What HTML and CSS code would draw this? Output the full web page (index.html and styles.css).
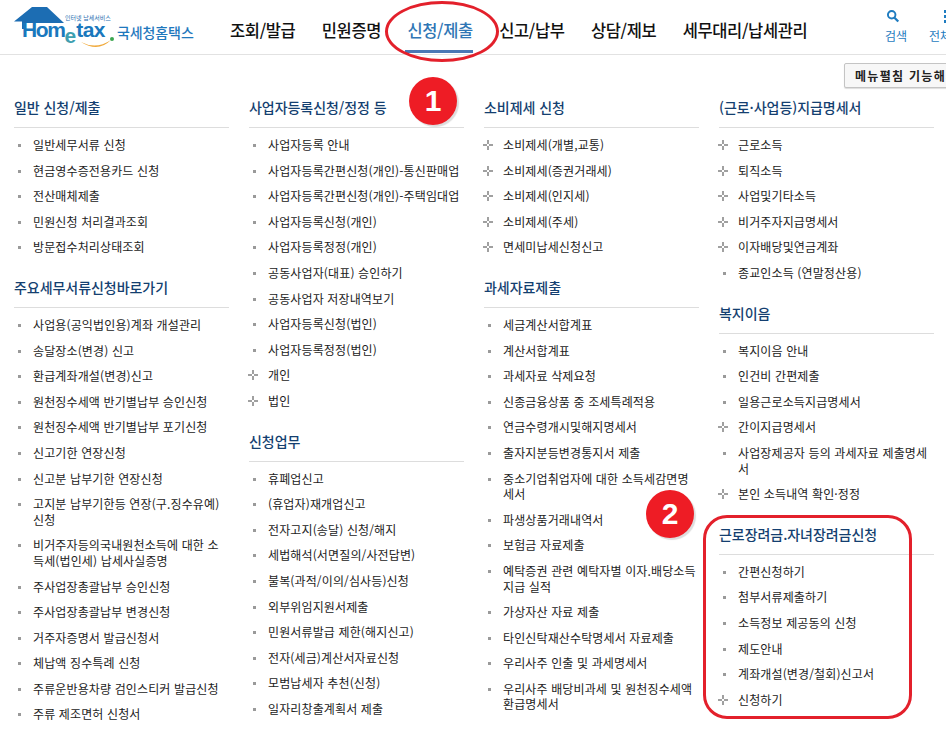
FILE: index.html
```html
<!DOCTYPE html>
<html lang="ko">
<head>
<meta charset="utf-8">
<title>Hometax</title>
<link rel="stylesheet" href="styles.css">
</head>
<body>
<div class="page">
<header class="top">
  <a class="logo">
    <svg class="house" width="106" height="44" viewBox="0 0 106 44">
      <path d="M0 15.5 L18 1 L33 1 L50 17 L10 17 L10 23 L8 23 L8 15.5 Z" fill="#1c6db3"/>
      <path d="M67 36 Q82 44 97 34 Q84 47 67 36 Z" fill="#f0a93a"/>
      <circle cx="98" cy="33" r="2" fill="#3aa651"/>
    </svg>
    <span class="logo-small">인터넷 납세서비스</span>
    <span class="logo-word"><span class="lw-a">Hom</span><i>e</i><span class="lw-b">tax</span></span>
    <span class="logo-kr">국세청홈택스</span>
  </a>
  <nav class="menu">
    <a>조회/발급</a>
    <a>민원증명</a>
    <a class="on">신청/제출</a>
    <a>신고/납부</a>
    <a>상담/제보</a>
    <a>세무대리/납세관리</a>
  </nav>
  <div class="tools">
    <a class="tool tool-a"><svg width="14" height="15" viewBox="0 0 16 16"><circle cx="6.5" cy="6" r="4.3" fill="none" stroke="#1f7cc0" stroke-width="2.2"/><path d="M9.7 9.4 L14 13.8" stroke="#1f7cc0" stroke-width="2.6"/></svg><span>검색</span></a>
    <a class="tool tool-b"><svg width="16" height="16" viewBox="0 0 16 16"><rect x="1" y="1" width="3" height="3" fill="#1f7cc0"/><rect x="1" y="6" width="3" height="3" fill="#1f7cc0"/><rect x="1" y="11" width="3" height="3" fill="#1f7cc0"/><rect x="6" y="1" width="3" height="3" fill="#1f7cc0"/><rect x="6" y="6" width="3" height="3" fill="#1f7cc0"/><rect x="6" y="11" width="3" height="3" fill="#1f7cc0"/></svg><span>전체메뉴</span></a>
  </div>
</header>
<div class="bar"><button class="expand">메뉴펼침 기능해제</button></div>
<main class="cols">
  <div class="col">
    <section>
      <h2>일반 신청/제출</h2>
      <ul>
        <li>일반세무서류 신청</li>
        <li>현금영수증전용카드 신청</li>
        <li>전산매체제출</li>
        <li>민원신청 처리결과조회</li>
        <li>방문접수처리상태조회</li>
      </ul>
    </section>
    <section>
      <h2>주요세무서류신청바로가기</h2>
      <ul>
        <li>사업용(공익법인용)계좌 개설관리</li>
        <li>송달장소(변경) 신고</li>
        <li>환급계좌개설(변경)신고</li>
        <li>원천징수세액 반기별납부 승인신청</li>
        <li>원천징수세액 반기별납부 포기신청</li>
        <li>신고기한 연장신청</li>
        <li>신고분 납부기한 연장신청</li>
        <li>고지분 납부기한등 연장(구.징수유예)신청</li>
        <li>비거주자등의국내원천소득에 대한 소득세(법인세) 납세사실증명</li>
        <li>주사업장총괄납부 승인신청</li>
        <li>주사업장총괄납부 변경신청</li>
        <li>거주자증명서 발급신청서</li>
        <li>체납액 징수특례 신청</li>
        <li>주류운반용차량 검인스티커 발급신청</li>
        <li>주류 제조면허 신청서</li>
      </ul>
    </section>
  </div>
  <div class="col">
    <section>
      <h2>사업자등록신청/정정 등</h2>
      <ul>
        <li>사업자등록 안내</li>
        <li>사업자등록간편신청(개인)-통신판매업</li>
        <li>사업자등록간편신청(개인)-주택임대업</li>
        <li>사업자등록신청(개인)</li>
        <li>사업자등록정정(개인)</li>
        <li>공동사업자(대표) 승인하기</li>
        <li>공동사업자 저장내역보기</li>
        <li>사업자등록신청(법인)</li>
        <li>사업자등록정정(법인)</li>
        <li class="plus">개인</li>
        <li class="plus">법인</li>
      </ul>
    </section>
    <section>
      <h2>신청업무</h2>
      <ul>
        <li>휴폐업신고</li>
        <li>(휴업자)재개업신고</li>
        <li>전자고지(송달) 신청/해지</li>
        <li>세법해석(서면질의/사전답변)</li>
        <li>불복(과적/이의/심사등)신청</li>
        <li>외부위임지원서제출</li>
        <li>민원서류발급 제한(해지신고)</li>
        <li>전자(세금)계산서자료신청</li>
        <li>모범납세자 추천(신청)</li>
        <li>일자리창출계획서 제출</li>
      </ul>
    </section>
  </div>
  <div class="col">
    <section>
      <h2>소비제세 신청</h2>
      <ul>
        <li class="plus">소비제세(개별,교통)</li>
        <li class="plus">소비제세(증권거래세)</li>
        <li class="plus">소비제세(인지세)</li>
        <li class="plus">소비제세(주세)</li>
        <li class="plus">면세미납세신청신고</li>
      </ul>
    </section>
    <section>
      <h2>과세자료제출</h2>
      <ul>
        <li>세금계산서합계표</li>
        <li>계산서합계표</li>
        <li>과세자료 삭제요청</li>
        <li>신종금융상품 중 조세특례적용</li>
        <li>연금수령개시및해지명세서</li>
        <li>출자지분등변경통지서 제출</li>
        <li>중소기업취업자에 대한 소득세감면명세서</li>
        <li>파생상품거래내역서</li>
        <li>보험금 자료제출</li>
        <li>예탁증권 관련 예탁자별 이자.배당소득 지급 실적</li>
        <li>가상자산 자료 제출</li>
        <li>타인신탁재산수탁명세서 자료제출</li>
        <li>우리사주 인출 및 과세명세서</li>
        <li>우리사주 배당비과세 및 원천징수세액 환급명세서</li>
      </ul>
    </section>
  </div>
  <div class="col">
    <section>
      <h2>(근로·사업등)지급명세서</h2>
      <ul>
        <li class="plus">근로소득</li>
        <li class="plus">퇴직소득</li>
        <li class="plus">사업및기타소득</li>
        <li class="plus">비거주자지급명세서</li>
        <li class="plus">이자배당및연금계좌</li>
        <li>종교인소득 (연말정산용)</li>
      </ul>
    </section>
    <section>
      <h2>복지이음</h2>
      <ul>
        <li>복지이음 안내</li>
        <li>인건비 간편제출</li>
        <li>일용근로소득지급명세서</li>
        <li class="plus">간이지급명세서</li>
        <li>사업장제공자 등의 과세자료 제출명세서</li>
        <li class="plus">본인 소득내역 확인·정정</li>
      </ul>
    </section>
    <section>
      <h2>근로장려금.자녀장려금신청</h2>
      <ul>
        <li>간편신청하기</li>
        <li>첨부서류제출하기</li>
        <li>소득정보 제공동의 신청</li>
        <li>제도안내</li>
        <li>계좌개설(변경/철회)신고서</li>
        <li class="plus">신청하기</li>
      </ul>
    </section>
  </div>
</main>
<div class="ring-nav"></div>
<div class="badge badge-1">1</div>
<div class="badge badge-2">2</div>
<div class="ring-box"></div>
</div>
</body>
</html>
```
FILE: styles.css
```css
* { box-sizing: border-box; }
html, body { margin: 0; padding: 0; background: #fff; }
body { font-family: "Noto Sans CJK KR", "Noto Sans", sans-serif; color: #222; }
.page { position: relative; width: 946px; height: 737px; overflow: hidden; }
.top { height: 55px; border-bottom: 1px solid #e2e2e2; display: flex; align-items: flex-start; position: relative; }
.logo { position: relative; display: block; width: 196px; height: 54px; flex: none; }
.house { position: absolute; left: 14px; top: 6px; }
.logo-small { position: absolute; left: 65px; top: 14px; font-size: 6px; line-height: 7px; color: #1f6fb0; white-space: nowrap; }
.logo-word { position: absolute; left: 22px; top: 22px; font-family: "Liberation Sans", sans-serif; font-size: 21px; line-height: 16px; font-weight: 700; color: #1a78bd; white-space: nowrap; display: flex; }
.lw-a { letter-spacing: -1.4px; }
.lw-b { letter-spacing: -0.5px; }
.logo-word i { font-style: normal; color: #3f9fb0; font-size: 21px; position: relative; top: 6px; margin: 0; }
.logo-kr { position: absolute; left: 117px; top: 22px; font-size: 14px; line-height: 20px; font-weight: 500; color: #1f78bd; letter-spacing: -0.1px; white-space: nowrap; }
.menu { display: flex; margin-left: 34px; height: 54px; flex: none; }
.menu a { display: block; font-size: 16.5px; line-height: 22px; padding-top: 19px; font-weight: 500; color: #111; white-space: nowrap; letter-spacing: -0.35px; margin-right: 26.3px; height: 53px; }
.menu a.on { color: #2f76b5; border-bottom: 3px solid #4a78b5; margin-left: -2px; padding-left: 2px; }
.tools { position: absolute; left: 884px; top: 9px; display: flex; gap: 19px; }
.tool { display: flex; flex-direction: column; align-items: center; font-size: 12px; line-height: 16px; color: #1f7cc0; white-space: nowrap; flex: none; }
.tool-a { width: 24px; }
.tool-a svg { margin-right: 6px; margin-bottom: 4px; }
.tool-b { width: 48px; }
.tool-b svg { margin-bottom: 3px; }
.bar { height: 33px; position: relative; }
.expand { position: absolute; left: 844px; top: 8px; height: 25px; width: 130px; padding: 0 0 0 10px; text-align: left; font-family: inherit; font-size: 12px; font-weight: 700; letter-spacing: 1.3px; color: #222; background: #f7f7f7; border: 1px solid #c4c4c4; border-radius: 2px; white-space: nowrap; box-shadow: 0 1px 1px #ddd; }
.cols { display: flex; gap: 20px; padding: 0 0 0 14px; }
.col { width: 215px; flex: none; }
section { margin-bottom: 13px; }
h2 { margin: 0; height: 40px; padding-top: 9px; font-size: 14px; line-height: 20px; font-weight: 500; color: #143f70; border-bottom: 1px solid #ddd; letter-spacing: -0.05px; white-space: nowrap; }
ul { list-style: none; margin: 0; padding: 9px 0 0; }
li { position: relative; padding-left: 19px; font-size: 12px; line-height: 15.6px; margin-bottom: 10px; color: #222; letter-spacing: 0.13px; }
li::before { content: ""; position: absolute; left: 4px; top: 7px; width: 3px; height: 3px; background: #9a9a9a; }
li.plus::before { left: -1px; top: 3px; width: 10px; height: 10px; background:
  linear-gradient(#a0a0a0, #a0a0a0) 4px 0 / 2px 4px no-repeat,
  linear-gradient(#a0a0a0, #a0a0a0) 4px 6px / 2px 4px no-repeat,
  linear-gradient(#a0a0a0, #a0a0a0) 0 4px / 4px 2px no-repeat,
  linear-gradient(#a0a0a0, #a0a0a0) 6px 4px / 4px 2px no-repeat; }
.ring-nav { position: absolute; left: 385px; top: 1px; width: 114px; height: 61px; border: 3px solid #e3202b; border-radius: 50%; }
.badge { position: absolute; width: 48px; height: 48px; border-radius: 50%; background: #ee1c25; color: #fff; font-family: "Liberation Sans", sans-serif; font-size: 30px; font-weight: 700; line-height: 48px; text-align: center; box-shadow: 2px 2px 1px #ddd; }
.badge-1 { left: 409px; top: 77px; }
.badge-2 { left: 646px; top: 490px; }
.ring-box { position: absolute; left: 703px; top: 515px; width: 209px; height: 204px; border: 3px solid #e3202b; border-radius: 24px; }
```
